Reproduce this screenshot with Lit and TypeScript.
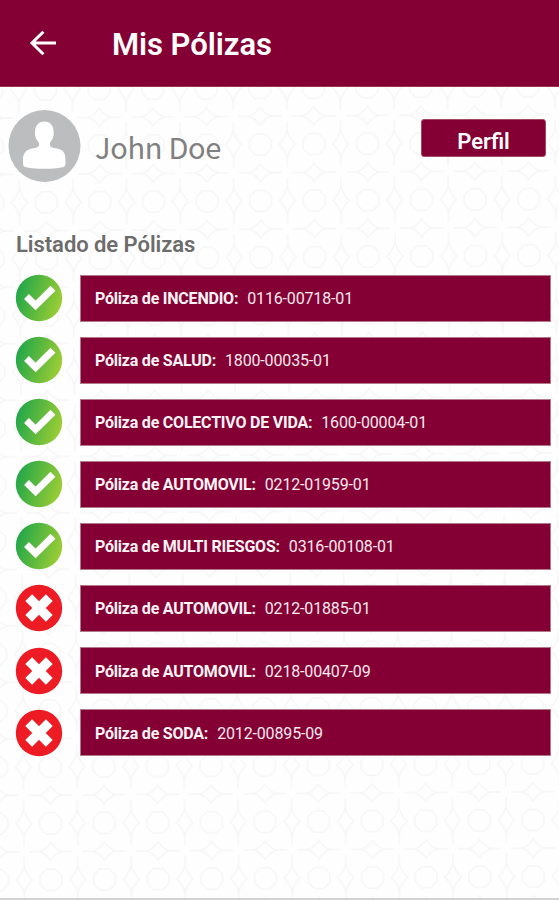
import { LitElement, html, css, svg } from "lit";
import { customElement, property } from "lit/decorators.js";

interface Policy {
  kind: string;
  code: string;
  active: boolean;
}

const policies: Policy[] = [
  { kind: "INCENDIO", code: "0116-00718-01", active: true },
  { kind: "SALUD", code: "1800-00035-01", active: true },
  { kind: "COLECTIVO DE VIDA", code: "1600-00004-01", active: true },
  { kind: "AUTOMOVIL", code: "0212-01959-01", active: true },
  { kind: "MULTI RIESGOS", code: "0316-00108-01", active: true },
  { kind: "AUTOMOVIL", code: "0212-01885-01", active: false },
  { kind: "AUTOMOVIL", code: "0218-00407-09", active: false },
  { kind: "SODA", code: "2012-00895-09", active: false },
];

@customElement("status-icon")
class StatusIcon extends LitElement {
  @property({ type: Boolean }) active = false;

  static styles = css`
    :host { display: block; width: 48px; height: 48px; flex: none; }
    svg { display: block; }
  `;

  render() {
    return html`<svg width="48" height="48" viewBox="0 0 48 48">
      <defs>
        <linearGradient id="g" x1="0" y1="0.35" x2="1" y2="0.65">
          <stop offset="0" stop-color="#20a64b" />
          <stop offset="0.5" stop-color="#5fba3d" />
          <stop offset="1" stop-color="#a0ce35" />
        </linearGradient>
      </defs>
      ${this.active
        ? svg`<circle cx="24" cy="24" r="23.2" fill="url(#g)"/>
            <path d="M11.5 22.6 L20.6 31.4 L38 14.2" fill="none" stroke="#fff" stroke-width="7"/>`
        : svg`<circle cx="24" cy="24" r="23.2" fill="#ed1c24"/>
            <path d="M13.7 13.7 L34.3 34.3 M34.3 13.7 L13.7 34.3" fill="none" stroke="#fff" stroke-width="9.6" stroke-linejoin="round"/>`}
    </svg>`;
  }
}

@customElement("policy-row")
class PolicyRow extends LitElement {
  @property({ attribute: false }) policy!: Policy;

  static styles = css`
    :host { display: flex; align-items: center; gap: 17px; height: 48px; }
    .bar {
      flex: 1; height: 47px; box-sizing: border-box; padding: 2px 14px 0;
      display: flex; align-items: center; gap: 9px;
      background: #840034; border: 1px solid #b27a88;
      color: #fbe9ee; font-size: 16px; line-height: 20px; white-space: pre;
      letter-spacing: -0.15px;
    }
    .kind { font-weight: 700; color: #fff4f6; letter-spacing: -0.22px; }
  `;

  render() {
    return html`<status-icon ?active=${this.policy.active}></status-icon>
      <div class="bar"><span class="kind">Póliza de ${this.policy.kind}:</span><span>${this.policy.code}</span></div>`;
  }
}

@customElement("app-root")
class AppRoot extends LitElement {
  static styles = css`
    :host {
      display: flex; flex-direction: column; position: relative;
      width: 559px; height: 900px; box-sizing: border-box; overflow: hidden;
      background: #fefefe; border-bottom: 2px solid #d2d2d2;
      font-family: Roboto, "Liberation Sans", sans-serif;
    }
    .pattern { position: absolute; inset: 0; }
    header, main { position: relative; }
    header {
      height: 87px; box-sizing: border-box; flex: none; padding: 0 0 0 28px;
      display: flex; align-items: center; gap: 56px;
      background: #840034; border-bottom: 1px solid #9c3450; color: #fff;
    }
    header svg { display: block; }
    h1 { margin: 3px 0 0; font-size: 31px; line-height: 40px; font-weight: 600; letter-spacing: -0.05px; white-space: nowrap; }
    main { padding: 22px 8px 0 7px; }
    .profile { display: flex; align-items: flex-start; height: 74px; padding-left: 1px; }
    .avatar { display: block; flex: none; }
    .name {
      flex: 1; margin-left: 13px; padding-top: 17px; font-size: 29px; line-height: 40px; letter-spacing: -0.3px;
      color: #808080; font-family: "Noto Sans CJK SC", "Noto Sans", sans-serif; font-weight: 400;
    }
    button {
      margin: 10px 5px 0 0; width: 125px; height: 38px; padding: 7px 0 0; border: 1px solid #a34a62;
      border-radius: 3px; background: #840034; color: #fff;
      font: 600 22px/28px Roboto, sans-serif;
    }
    h2 { margin: 47px 0 14px 9px; font-size: 22px; line-height: 30px; font-weight: 600; letter-spacing: -0.05px; color: #6c6c6c; }
    .list { display: flex; flex-direction: column; gap: 14.1px; padding-left: 8px; }
  `;

  render() {
    return html`
      <svg class="pattern" width="559" height="900">
        <defs>
          <pattern id="lattice" width="53.6" height="56.45" patternUnits="userSpaceOnUse"
            patternTransform="translate(18.5 61.5) rotate(-0.4)">
            <g fill="none" stroke="#f6f6f6" stroke-width="1.5">
              <path d="M22.2 17.5 H31.4 L37.6 23.8 V32.6 L31.4 38.8 H22.2 L16 32.6 V23.8 Z" />
              <path d="M0 5 V13 Q0 19 8 28.2 Q0 37 0 43 V51" />
              <path d="M53.6 5 V13 Q53.6 19 45.6 28.2 Q53.6 37 53.6 43 V51" />
              <path d="M5 0 H14 Q20 0 26.8 9 Q33.6 0 39.6 0 H48.6" />
              <path d="M5 56.4 H14 Q20 56.4 26.8 47.4 Q33.6 56.4 39.6 56.4 H48.6" />
            </g>
          </pattern>
        </defs>
        <rect width="559" height="900" fill="url(#lattice)" />
      </svg>
      <header>
        <svg width="28" height="26" viewBox="0 0 28 26">
          <path d="M15.4 1.8 L4 13 L15.4 24.2 M3.5 13 H28" fill="none" stroke="#fff" stroke-width="3" />
        </svg>
        <h1>Mis Pólizas</h1>
      </header>
      <main>
        <section class="profile">
          <svg class="avatar" width="74" height="74" viewBox="0 0 74 74">
            <circle cx="36.5" cy="37" r="36" fill="#bbbdbf" />
            <path fill="#fff" d="M36.3 12.5 C42 12.5 45.6 16.5 45.6 22.5 C46.2 27.5 44.5 30.5 42.2 33.2 C41.3 35.5 41.8 37.5 44 38.5 L51 40 C56 41.5 57.5 45.5 57.5 50.5 V54.5 C57.5 57 56.8 57.7 54.5 58.2 C43 60.4 29 60.4 18 58.2 C15.8 57.7 15 57 15 54.5 V50.5 C15 45.5 17 41.5 22 40 L29 38.5 C31.2 37.5 31.5 35.5 30.6 33.2 C28.2 30.5 26.5 27.5 27.1 22.5 C27.1 16.5 31 12.5 36.3 12.5 Z" />
          </svg>
          <div class="name">John Doe</div>
          <button>Perfil</button>
        </section>
        <h2>Listado de Pólizas</h2>
        <div class="list">
          ${policies.map((p) => html`<policy-row .policy=${p}></policy-row>`)}
        </div>
      </main>
    `;
  }
}
